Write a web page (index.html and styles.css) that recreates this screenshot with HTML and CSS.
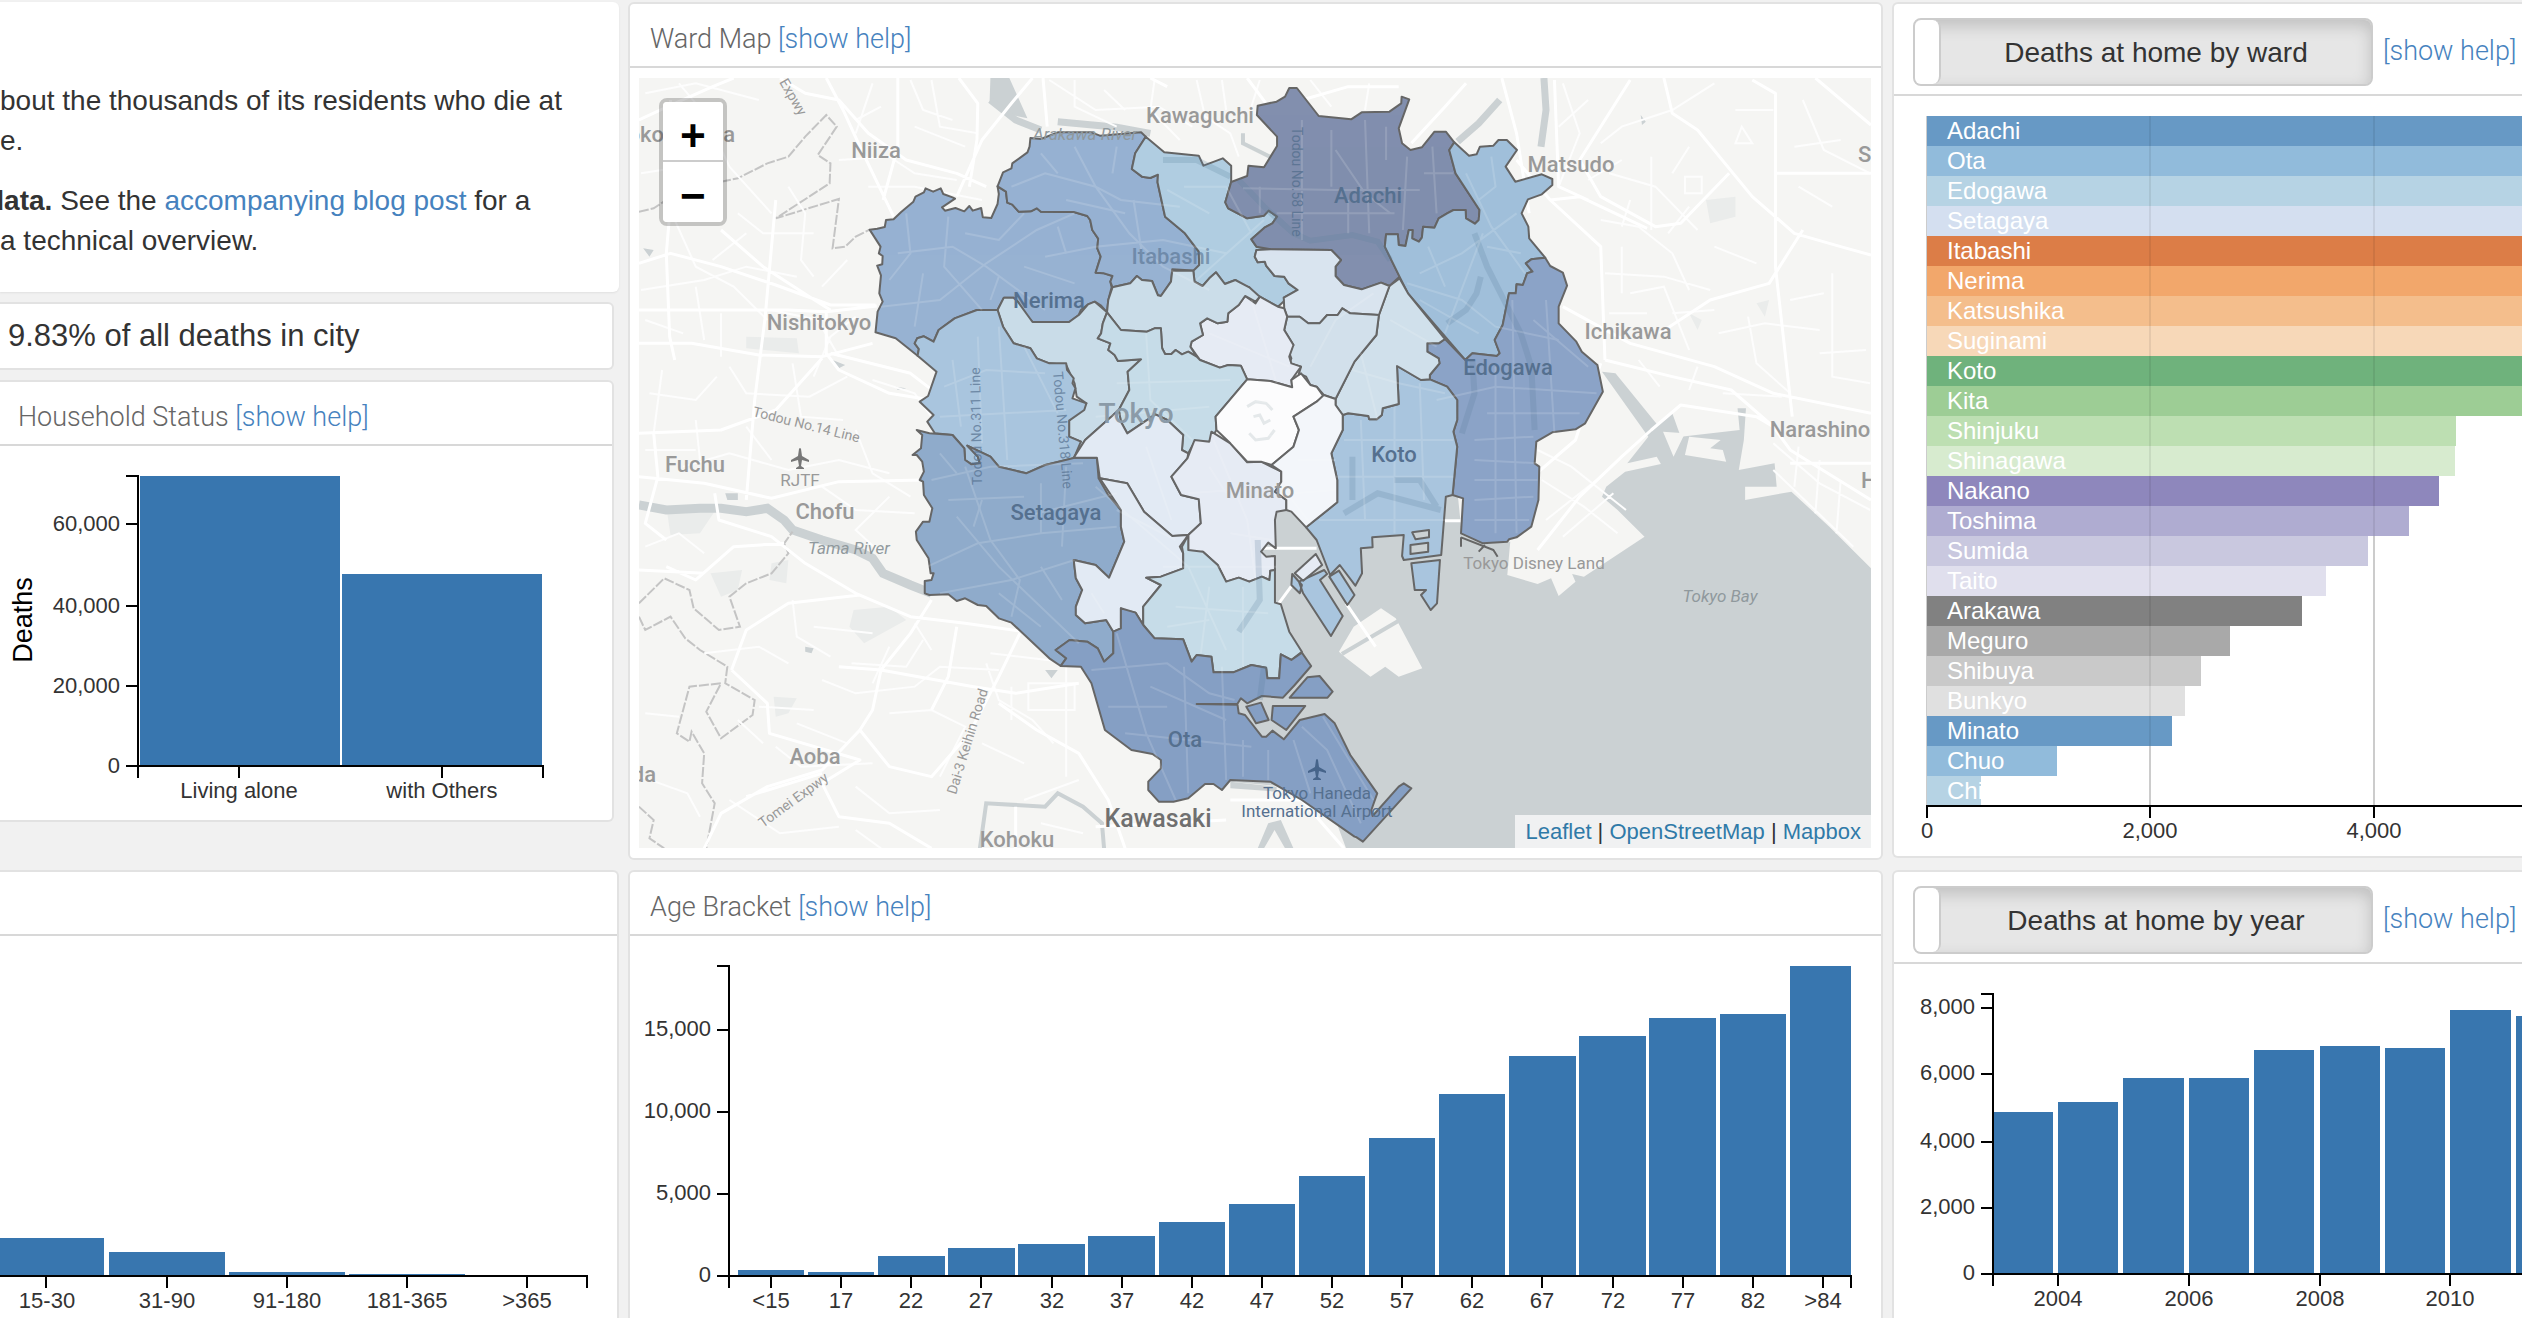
FILE: index.html
```html
<!DOCTYPE html>
<html lang="en">
<head>
<meta charset="utf-8">
<title>Tokyo deaths at home</title>
<link rel="stylesheet" href="styles.css">
</head>
<body>
<main class="dashboard">
  <div class="stack">
    <section class="intro">
      <p>bout the thousands of its residents who die at<br>e.</p>
      <p><strong class="cut">data.</strong> See the <a href="#post">accompanying blog post</a> for a<br>a technical overview.</p>
    </section>
    <section class="card open-left inset summary">9.83% of all deaths in city</section>
    <section class="card open-left inset">
      <h2 class="card-head">Household Status <a href="#help-household">[show help]</a></h2>
      <svg class="chart" viewBox="0 446 612 374" role="img" aria-label="Deaths by household status">
        <g class="bars"><rect x="140" y="476" width="200" height="290"/><rect x="342" y="574" width="200" height="192"/></g>
        <path class="axis" d="M126 476H138V766H126M126 524H138M126 606H138M126 686H138M138 778V766H543V778M239 766V778M442 766V778"/>
        <g class="tick end"><text x="120" y="531">60,000</text><text x="120" y="613">40,000</text><text x="120" y="693">20,000</text><text x="120" y="773">0</text></g>
        <g class="tick mid"><text x="239" y="798">Living alone</text><text x="442" y="798">with Others</text></g>
        <text class="axis-name" transform="translate(32 620) rotate(-90)" text-anchor="middle">Deaths</text>
      </svg>
    </section>
  </div>

  <section class="card">
    <h2 class="card-head">Ward Map <a href="#help-map">[show help]</a></h2>
    <div class="map">
      <svg class="map-canvas" viewBox="639 78 1232 770" role="img" aria-label="Map of Tokyo wards">
        <rect class="land" x="639" y="78" width="1232" height="770"/>
        <g transform="translate(620 0) scale(.42092 .33333)">
          <g class="park">
            <path d="M300 1010L420 1015 425 1060 300 1045ZM110 1520L230 1525 190 1600 120 1605ZM555 1830L640 1820 680 1860 580 1930 545 1880ZM215 1720L290 1710 280 1770 240 1790ZM365 2090L420 2095 400 2140 370 2150ZM2580 600L2650 590 2650 650 2590 670ZM2700 910L2730 900 2720 950ZM360 1690L400 1680 395 1750 355 1740ZM2540 940L2570 960 2560 990Z"/>
          </g>
          <g class="water">
            <path d="M1556 1520L1990 1480 2000 1605 2050 1632 2115 1625 2108 1725 2180 1752 2212 1735 2230 1788 2270 1745 2262 1722 2290 1730 2434 1610 2370 1530 2333 1490 2343 1460 2388 1415 2473 1392 2463 1370 2393 1390 2443 1310 2333 1115 2365 1120 2465 1275 2500 1240 2520 1310 2660 1290 2655 1225 2675 1225 2670 1320 2658 1410 2743 1390 2748 1460 2673 1460 2673 1500 2783 1475 2873 1580 2972 1705 2972 2545 1725 2545 1700 2460 1580 2360 1450 2345 1450 1900Z"/>
            <path d="M880 234H925L968 355 930 345 900 315 878 305Z"/>
            <path d="M1515 2545L1540 2470 1570 2460 1600 2545H1580L1555 2490 1530 2545ZM1450 2345L1560 2360 1560 2375 1450 2365ZM55 745L80 750 70 770ZM505 1080L535 1095 520 1105ZM655 1160L680 1165 660 1170ZM2425 345L2437 365 2428 375ZM440 1940L460 1945 455 1960 440 1955ZM1010 2010H1040L1025 2035ZM250 1480H280V1500H255Z"/>
          </g>
          <g class="land">
            <path d="M1708 1955L1743 1880 1808 1825 1843 1855 1906 2005 1850 2030 1818 2000 1783 2030 1726 1975ZM2478 1295L2503 1370 2530 1300ZM2540 1310L2530 1365 2628 1385 2620 1350 2590 1345 2615 1320Z"/>
          </g>
          <g class="river">
            <path stroke-width="9" d="M45 1515L110 1530 190 1525 240 1525 300 1535 350 1525 390 1560 410 1590 480 1620 560 1650 600 1675 625 1720 690 1755 740 1780"/>
            <path stroke-width="7" d="M880 300L940 360 1000 390M1040 365L1180 382 1260 400M2195 234L2200 330 2188 440M2090 300L2040 370 1990 425"/>
            <path stroke-width="4" d="M855 2545L870 2410 1010 2420 1040 2380 1100 2420 1145 2470 1150 2545M1480 400V430L1560 480M1715 1962L1850 1862"/>
          </g>
          <g class="boundary">
            <path d="M45 635L80 625 110 600M240 545L280 535 350 490 400 470 440 410 490 345 515 380 470 465 500 490 498 550 370 655 520 597 505 745 535 740 560 710 593 689"/>
            <path d="M45 1810L105 1735 165 1770 175 1825 235 1890 285 1880 260 1790 300 1750 360 1720 400 1660 390 1630 410 1595"/>
            <path d="M45 1850L60 1890 120 1850 155 1915 190 1950 255 2000 250 2050 320 2100 315 2145 240 2215 205 2135 240 2050 165 2060 135 2200 165 2225 170 2195 200 2260 195 2350 225 2410 205 2545M45 2420L80 2460 70 2515 105 2545"/>
          </g>
          <g class="minor">
            <path d="M60 280L180 250 330 300M50 520L150 500 230 470M130 660L180 800 270 860 350 960M50 870L200 840 300 800 420 830M400 560L440 640 430 780 460 830M520 480L640 470 700 520 800 540M560 400L600 250M690 240L720 330 790 360M740 240L760 380 850 400M590 560L700 560 860 600M260 1100L300 1180 450 1190 540 1130M100 1110L80 1300M410 1090L430 1250 530 1260M600 1140L700 1180 740 1250M150 1400L260 1360 400 1410 520 1380 640 1420M560 1290L600 1420 690 1490M480 1460L560 1530 700 1540M60 1640L140 1600 200 1660M410 1800L420 1910 500 1970M550 1990L680 2000 720 1920M480 2040L560 2080 700 2060 760 2000 900 2010M870 1990L900 2100 980 2160 1030 2230M640 2140L740 2130 820 2180 760 2330M200 1960L330 1940 400 1990M370 2240L430 2300 600 2290M260 2400L380 2500 520 2480M560 2360L640 2440 760 2430M930 2060V2160M970 2050H1080V2130H970ZM1060 2000V2330M880 1960L1080 1990M1020 240L1130 330 1280 320 1360 380M1080 240V320L1180 380M1270 240L1260 330 1330 420M1370 240L1390 350 1450 400 1470 470M1520 240L1500 320M1640 240L1690 320M1780 250L1770 330M2240 250L2280 400 2230 560M2330 430L2380 380 2500 330 2600 250M2350 520L2460 560 2560 690M2330 660L2420 680 2500 760 2540 870M2340 820L2480 830 2590 870M2450 470V690M2400 880L2480 860 2540 1050M2610 1000L2720 970 2850 990M2880 820V1130L2970 1150M2620 1180L2760 1190M2680 950L2700 1090 2780 1180M2810 300L2860 450 2970 520M2530 530H2570V580H2530ZM2650 430L2665 380 2690 430ZM2180 1350L2260 1400 2390 1530M2190 1440L2290 1520 2370 1600M2200 1560L2330 1430M2240 1610L2360 1480M2740 1330L2850 1450 2970 1530M2800 1340L2790 1460M2850 1380L2840 1540M2900 1440L2890 1600M2740 1410L2930 1640M50 2330L160 2380 190 2450M560 950L500 1010 460 1130M230 420L260 500 360 640M240 940V1070M360 930L470 960 520 1070"/>
            <path d="M180 860L200 1020M70 1180L180 1200 230 1130M180 1260L190 1380M60 960L150 1000M300 1280L360 1380M140 250L200 340 190 460M280 640L340 700 460 700M540 780L480 860M300 700L220 780M620 320L560 360M700 380L820 440M60 1350L180 1350M640 1490L560 1590 620 1660M460 1880L600 1900M330 2120L460 2130M420 2170L540 2230M640 1940L600 2050M700 1870L740 1950M860 2230L960 2290M960 2400L1090 2340M1000 2470L1100 2500M560 2490L620 2545M60 2140L140 2150M280 2160L340 2230M1150 270L1200 330M1430 240L1440 330M2300 300L2230 380M2380 480L2300 540M2540 440L2500 520M2740 330L2650 330M2790 440L2900 420M2800 560L2880 620M2400 600L2380 680M2600 740L2700 790M2350 940L2440 940M2500 940L2600 930M2780 900L2860 880M2560 1100L2540 1170M2420 1080L2470 1160M2850 1060L2960 1050M2380 740V880M2540 620L2490 700"/>
          </g>
          <g id="roads" class="road">
            <path d="M45 790L120 760 240 800 370 855 500 915 607 915M120 300L125 540 110 760 118 1010 130 1080M45 360L130 310 220 260 270 234M380 234L440 280 520 300 590 400 680 480 800 520 870 560M490 234L530 330 570 440 650 650M660 234V440L625 600M805 234L850 310 848 420 830 560M980 234L930 310 860 420 800 590M45 930H400L490 935 610 918M45 1030L170 1030 330 1065 480 1070 600 1030M240 690L340 800 450 890 500 930M370 600L345 950 320 1200 300 1500M490 930V1060L520 1110 640 1180 740 1200M480 1075L370 1230 240 1290 45 1300M500 1060L690 1120 752 1180M45 1430L200 1450 360 1495 520 1445 720 1440M80 1300L90 1430 60 1570 110 1620M225 1480L235 1560 360 1610 440 1690 560 1780 690 1850 820 1870 990 1900M110 1700L180 1740 270 1640 390 1630M45 1710L200 1720M570 1785L400 1810 300 1890 265 2010M740 1800L690 1900 620 2010 600 2130 570 2190 480 2310 350 2360 240 2440 200 2545M570 2190L640 2300 740 2330 830 2200 900 2030 950 1900M265 2010L350 2110 355 2200 570 2280 480 2350 520 2450 640 2470 740 2545M480 2320L300 2390M520 2000L620 2010 840 2060 940 2080 1090 2050M800 1880L780 2030 740 2130M900 2110L990 2190 1090 2260 1160 2400 1200 2545M940 2545V2420M1260 234L1300 260M1005 234L1015 380M1490 234L1570 370 1620 300 1730 260 1850 260M2095 234L2130 400 2160 640M2130 480L2210 600 2330 740 2340 1080M1880 430L1960 320 2010 250M2220 240L2230 560 2300 600M2480 234L2500 340 2560 390 2690 590 2790 700 2900 740 2972 765M2690 240L2745 280V800L2785 1250M2745 520H2972M2840 234L2972 375M2400 240L2280 480 2330 590 2460 680 2520 670 2635 520M2810 690L2730 850 2590 900 2470 1000M2210 600L2280 590 2440 685M2240 920L2400 1030 2600 1100 2740 1180 2972 1240M2340 1080L2500 1130 2640 1170 2740 1280 2780 1350 2972 1500M2180 1650L2280 1490 2380 1370 2450 1290 2520 1215 2700 1250 2740 1280M2330 1090L2270 1320 2150 1450M2780 1390H2972M1795 1940L1725 1810M1450 2400H1620L1720 2545M1130 2480L1440 2460M1530 1645H1655M1960 1562H2000M1565 1810L1600 1750"/>
          </g>
          <g class="ward">
            <path fill="#97b2d2" d="M593 689L611 686 629 681 632 660 650 658 668 636 697 605 702 590 722 577 726 565 744 575 762 565 768 582 790 592 796 596 765 622 772 632 797 624 818 634 830 618 838 632 858 624 862 652 882 654 897 612 900 582 897 559 917 575 920 608 932 614 947 635 976 634 990 625 1000 635 1078 636 1110 648 1117 660 1122 690 1136 716 1134 745 1142 770 1130 818 1150 820 1170 828 1165 845 1168 862 1160 900 1157 937 1143 917 1128 905 1112 913 1095 930 1090 945 1067 966 980 966 960 940 945 905 935 893 912 893 897 930 848 930 795 955 757 990 745 1025 722 1009 706 1015 700 1030 710 1047 707 1067 655 1015 607 997 612 935 624 905 616 880 620 826 611 797 623 793 624 768 615 760 619 740Z"/>
            <path fill="#97b2d2" d="M897 559L910 517 930 505 932 490 968 457 973 440 975 414 1000 417 1040 397 1120 397 1140 407 1238 397 1249 410 1224 460 1216 507 1240 530 1260 534 1278 524 1277 547 1295 650 1342 700 1375 755 1376 795 1370 812 1312 808 1309 845 1285 888 1278 886 1264 843 1240 840 1228 828 1212 850 1170 862 1165 845 1170 828 1150 820 1130 818 1142 770 1134 745 1136 716 1122 690 1117 660 1110 648 1078 636 1000 635 990 625 976 634 947 635 932 614 920 608 917 575Z"/>
            <path fill="#b0cde1" d="M1249 410L1293 457 1375 467 1386 497 1432 475 1452 497 1452 546 1438 607 1445 625 1490 655 1530 647 1541 632 1561 650 1550 670 1531 683 1500 718 1512 740 1546 748V757L1512 750 1508 770 1515 787 1532 785 1535 797 1555 828 1578 830 1588 850 1610 870 1577 893 1578 903 1563 920 1520 890 1500 882 1495 862 1478 856 1462 840 1437 852 1416 817 1400 835 1384 858 1365 845 1362 812 1376 795 1375 755 1342 700 1295 650 1277 547 1278 524 1260 534 1240 530 1216 507 1224 460Z"/>
            <path fill="#828fae" d="M1438 607L1452 546 1490 528 1493 497 1530 502 1561 438V410L1513 345 1515 317 1560 305 1580 290 1590 264H1608L1660 348 1737 358 1762 337 1828 335 1856 310 1857 290 1875 298 1850 385 1858 430 1878 450 1905 442 1935 395H1962L1982 427 1970 450 1985 520 2042 630 2040 660 2031 671 2010 655 2009 630H1980L1965 640 1945 655 1935 683 1908 680 1905 713 1898 725 1882 715 1883 690H1874L1866 738 1850 735 1848 703H1820L1817 740 1852 830 1828 858 1808 848 1762 868 1720 855 1700 828V800L1713 780 1690 750 1546 748 1512 740 1500 718 1531 683 1550 670 1561 650 1541 632 1530 647 1490 655 1445 625Z"/>
            <path fill="#a0bfda" d="M1982 427L2017 467 2035 463 2043 440 2075 437 2087 420H2107L2131 450 2104 500 2127 545 2190 523 2215 537V555L2190 583 2157 598 2142 640 2158 680 2160 715 2198 773 2165 778 2152 790 2168 815 2155 820 2145 855 2130 853 2128 880H2112L2097 975 2078 1020 2090 1060 2083 1068 2025 1060 2008 1080 1872 880 1852 830 1817 740 1820 703H1848L1850 735 1866 738 1874 690H1883L1882 715 1898 725 1905 713 1908 680 1935 683 1945 655 1965 640 1980 630H2009L2010 655 2031 671 2040 660 2042 630 1985 520 1970 450Z"/>
            <path fill="#8ba3c7" d="M2198 773L2210 798 2240 818 2250 857 2230 920V970L2272 1025 2285 1055 2322 1095 2335 1175 2293 1270 2270 1288 2215 1297 2177 1325 2173 1390 2184 1400 2182 1500 2165 1580 2130 1612 2112 1618 2108 1625 2050 1630 1998 1600 2003 1495 1978 1485 1989 1340 1980 1295 1989 1260V1200L1965 1160 1924 1138V1125L1947 1090 1945 1075 1918 1055V1030H1945L1960 1017 2008 1080 2025 1060 2083 1068 2090 1060 2078 1020 2097 975 2112 880H2128L2130 853 2145 855 2155 820 2168 815 2152 790 2165 778Z"/>
            <path fill="#a9c5de" d="M1846 1098L1903 1140 1924 1138 1965 1160 1989 1200V1260L1980 1295 1989 1340 1978 1485 1962 1490 1951 1665 1862 1680 1858 1668 1862 1605 1787 1612 1788 1642 1760 1645 1763 1720 1747 1757 1710 1695 1687 1725 1655 1620 1630 1582 1704 1507V1440L1690 1360 1717 1290V1245L1730 1240 1778 1248 1780 1258H1798L1810 1245 1812 1225 1850 1212Z"/>
            <path fill="#a9c5de" d="M1613 1745L1673 1710 1680 1722 1663 1740 1717 1848 1689 1908 1623 1780ZM1685 1730L1708 1712 1745 1785 1728 1815ZM1880 1690L1948 1680 1941 1810 1926 1830 1903 1785 1915 1770 1888 1770ZM1597 1722L1620 1755 1615 1780 1595 1755Z"/>
            <path fill="#cbd1d3" d="M1882 1597L1922 1590V1612L1890 1618ZM1878 1635L1920 1628V1655L1878 1662Z"/>
            <path fill="#d0e0eb" d="M1852 835L1872 880 1960 1017 1945 1030H1918V1055L1945 1075 1947 1090 1924 1125V1138L1903 1140 1846 1098 1850 1212 1812 1225 1810 1245 1798 1258H1780L1778 1248 1730 1240 1717 1245 1700 1215V1197L1745 1085 1797 1005 1803 945 1828 858Z"/>
            <path fill="#d9e4ef" d="M1546 748L1690 750 1713 780 1700 800V828L1720 855 1762 868 1808 848 1828 858 1803 945 1735 940 1716 925 1705 945H1680L1662 970H1635L1615 950H1585L1578 925 1577 893 1610 870 1588 850 1578 830 1555 828 1535 797 1532 785 1515 787 1508 770 1512 750Z"/>
            <path fill="#d2e0eb" d="M1803 945L1735 940 1716 925 1705 945H1680L1662 970H1635L1615 950H1585L1578 990 1600 1035 1590 1030 1582 1035 1595 1075 1590 1090 1618 1100 1613 1120 1630 1130 1640 1155 1655 1160 1672 1185 1700 1197 1745 1085 1797 1005Z"/>
            <path fill="#e6ebf4" d="M1378 970L1395 955 1420 970 1443 965 1445 940 1470 915 1485 888 1510 910 1520 890 1563 920 1578 925 1585 950 1578 990 1600 1035 1590 1070 1595 1090 1618 1100 1595 1140 1597 1162 1545 1143 1490 1138 1475 1097 1445 1095 1425 1103 1378 1080 1355 1040 1358 1025 1385 1005Z"/>
            <path fill="#cbdde9" d="M1170 862L1212 850 1228 828 1240 840 1264 843 1278 886 1285 888 1309 845 1312 812H1362L1365 845 1384 858 1400 835 1416 817 1437 852 1462 840 1495 862 1520 890 1510 905 1485 888 1470 915 1445 940 1443 965 1420 970 1395 955 1378 970 1385 1005 1358 1025 1355 1040 1370 1070 1350 1055 1335 1063 1320 1050 1310 1062H1295L1288 1045 1285 985H1270L1252 995 1190 990 1157 937 1160 900Z"/>
            <path fill="#c9dce8" d="M897 930L912 893H935L945 905 980 966H1067L1090 945 1112 913 1128 905 1157 937 1147 970 1143 1000 1135 1015 1165 1030 1160 1050 1175 1065 1183 1083 1238 1078 1206 1115 1210 1170 1185 1230 1105 1320 1078 1375 1078 1348 1095 1325 1067 1310V1262L1108 1210 1085 1190 1080 1150 1060 1095 1020 1090 990 1075 975 1045 935 1030 910 980Z"/>
            <path fill="#a9c5de" d="M707 1067L710 1047 700 1030 706 1015 722 1009 745 1025 757 990 795 955 848 930H897L910 980 935 1030 975 1045 990 1075 1020 1090H1060L1062 1110 1078 1135 1075 1150 1082 1165 1075 1195 1108 1210 1103 1230 1067 1262V1310L1095 1325 1078 1375 1010 1395 965 1420 900 1400 880 1370 825 1337 850 1370 855 1390 835 1393 820 1380 818 1345 790 1305 748 1300 730 1265 745 1245 712 1205 732 1188 752 1115Z"/>
            <path fill="#8fabcb" d="M705 1290L735 1300 790 1305 818 1345 820 1380 835 1393 855 1390 850 1370 825 1337 880 1370 900 1400 965 1420 1010 1395 1080 1373H1133L1137 1435 1160 1485 1190 1530V1580L1198 1625 1162 1733 1130 1695 1078 1680 1083 1735 1098 1770 1083 1820V1845L1105 1870 1155 1860 1172 1895V1960L1150 1985 1135 1945 1110 1925 1068 1920 1035 1950 1060 1975 1047 1998 1020 1975 930 1868 900 1855 870 1818 850 1815 820 1795 800 1803 780 1783 735 1785 724 1780V1743L740 1740 745 1720H738L733 1675 705 1620 703 1595 720 1565H735L742 1525 722 1485 720 1445 712 1440 722 1415 718 1385 705 1365H695L715 1345 718 1305Z"/>
            <path fill="#c6dce8" d="M1157 937L1190 990 1252 995 1270 985H1285L1288 1045 1295 1062H1310L1320 1050 1335 1063 1350 1055 1370 1070 1378 1080 1425 1103 1445 1095 1475 1097 1490 1138 1415 1250 1417 1290 1400 1325H1365L1350 1360 1335 1350 1338 1305 1300 1260 1272 1243 1205 1300 1190 1265 1185 1230 1210 1170 1206 1115 1238 1078 1183 1083 1175 1065 1160 1050 1165 1030 1135 1015 1143 1000 1147 970Z"/>
            <path fill="#e2eaf4" d="M1185 1230L1190 1265 1205 1300 1272 1243 1300 1260 1338 1305 1335 1350 1350 1360 1348 1375 1310 1430 1333 1485 1375 1498 1380 1570 1350 1605 1312 1608 1245 1535 1205 1450 1140 1435 1133 1373H1078L1105 1320Z"/>
            <path fill="#e2eaf4" d="M1140 1435L1205 1450 1245 1535 1312 1608 1350 1605 1330 1640 1338 1660V1705L1285 1730 1250 1733 1285 1755 1243 1820V1875L1225 1838 1215 1835H1195L1190 1825V1885L1172 1895 1155 1860 1105 1870 1083 1845V1820L1098 1770 1083 1735 1078 1680 1130 1695 1162 1733 1198 1625 1190 1580V1530Z"/>
            <path fill="#e6ebf4" d="M1400 1325L1405 1295 1450 1330 1490 1387 1523 1385 1571 1415V1445L1556 1475 1583 1500V1530L1560 1535 1556 1560 1558 1645 1540 1628 1523 1655 1535 1670 1556 1668V1710L1545 1712 1543 1740 1525 1730 1495 1745 1470 1733 1440 1745 1420 1695 1385 1655 1350 1660 1350 1605 1380 1570 1375 1498 1333 1485 1310 1430 1348 1375 1365 1320ZM1603 1720L1653 1662 1668 1695 1623 1742Z"/>
            <path fill="#fcfcfd" d="M1490 1138L1545 1143 1597 1162 1595 1140 1618 1120 1640 1155 1655 1160 1672 1190 1655 1205 1600 1250 1613 1290 1600 1340 1548 1395 1523 1385H1490L1450 1330 1417 1290 1415 1250Z"/>
            <path fill="#f3f6fa" d="M1672 1185L1700 1197V1215L1717 1245V1290L1690 1360 1704 1440V1507L1630 1582 1595 1535 1583 1530V1500L1556 1475 1571 1445V1415L1548 1395 1600 1340 1613 1290 1600 1250 1655 1205Z"/>
            <path fill="#c6dce8" d="M1335 1640L1350 1605V1650L1385 1655 1420 1695 1440 1745 1470 1733 1495 1745 1525 1730 1543 1740 1545 1712 1556 1710V1808L1570 1813 1590 1895 1620 1955 1595 1980 1570 1963 1566 2035H1538L1535 2003 1500 1995 1457 2017H1410L1405 1970 1370 1965 1358 1985 1338 1918 1270 1915 1243 1875V1820L1285 1755 1250 1733 1285 1730 1338 1705V1660Z"/>
            <path fill="#859fc4" d="M1047 1998L1060 1975 1035 1950 1068 1920 1110 1925 1135 1945 1150 1985 1172 1960V1895L1190 1885V1825L1225 1838 1243 1875 1270 1915 1338 1918 1358 1985 1370 1965 1405 1970 1410 2017H1457L1500 1995 1535 2003 1538 2035H1566L1570 1963 1595 1980 1620 1958 1642 1998 1603 2055 1575 2093 1525 2088 1490 2110 1475 2095 1467 2111 1370 2112 1467 2114 1470 2140 1485 2145 1525 2210H1535L1550 2192 1577 2218 1615 2160 1674 2142 1698 2170 1735 2265 1799 2380 1785 2430 1788 2448 1850 2360 1862 2350 1880 2365 1765 2525 1750 2512 1745 2510 1620 2400 1545 2345 1450 2340 1430 2370 1410 2352H1390L1350 2395 1315 2405H1280L1255 2370V2345L1285 2305V2280L1265 2262 1215 2250 1152 2190 1120 2050 1095 2000ZM1591 2093L1633 2032 1662 2028 1693 2075 1681 2093ZM1551 2118H1628L1583 2190 1548 2160ZM1488 2120L1523 2108 1541 2160 1511 2170Z"/>
            <path fill="none" d="M1998 1612L2075 1650 2085 1670M2040 1655L2055 1635M1998 1612V1640"/>
          </g>
          <g class="ward-water">
            <path d="M1470 540L1530 620 1600 700 1640 722 1740 705 1800 725 1830 780"/>
            <path d="M2030 700L2060 800 2100 900 2140 1000 2165 1100 2173 1290M1965 970L2010 930 2035 880 2045 830M2025 1080L2030 1180 2000 1300M1290 480H1370L1450 530"/>
            <path d="M1740 1370V1500M1840 1440H1900L1940 1520M1720 1540L1800 1480 1950 1530M1470 1895L1520 1800 1515 1620M1530 2000L1520 2100"/>
          </g>
          <g class="moat">
            <path d="M1490 1220L1510 1205 1535 1210 1550 1230M1495 1300L1510 1320 1540 1315 1555 1290M1505 1250L1520 1245 1530 1270 1545 1260"/>
          </g>
          <g class="ward-roads">
            <path d="M620 920L760 900 870 790 990 690 1080 640M660 760L790 740 870 800 1010 930M780 650L770 800 860 930M930 560L1010 520 1130 560 1190 600 1330 620M1080 440L1130 560 1210 700 1290 800 1400 870M1010 770L1130 740 1290 720 1440 760M1340 560L1440 560 1500 700M1370 840L1530 660M1480 565L1700 570 1900 570M1620 360V720M1770 360L1780 700M1870 470L1860 690M1700 450L1770 580 1830 640M1930 440L1940 640M2010 520L2070 680 2150 820M1900 820L2000 760 2130 640M1870 850L2000 900 2080 980 2230 1020M2050 700L1960 1000M1940 1200L2080 1160 2320 1180M2120 900L2130 1600M2200 900L2220 1300M2030 1380L2180 1390M2030 1500L2170 1490M1790 880L1700 960 1640 1100M1830 960L1940 1040M1740 1110L1850 1150 1960 1180M1760 1060L1800 1260M1900 1150L1910 1500M1760 1260L1770 1560M1840 1220V1600M1720 1320H1980M1700 1430H1980M1660 1560L1960 1560M770 1160L870 1110 1010 1120M760 1250L1060 1230M850 1010L860 1330M960 1040L1040 1240M1180 1150L1450 1140M1130 1250L1400 1220M1250 1000L1260 1200 1360 1320M740 1440L880 1400 1100 1390M730 1700L850 1630 1000 1600 1180 1580M820 1400L880 1620 950 1740 930 1850M760 1780L930 1740 1080 1680M800 1550L900 1700 1090 1930M1000 1450V1600M1130 1460L1350 1700 1440 1950M1180 1530L1320 1620M1250 1340L1310 1560M1410 1320L1490 1560 1510 1740M1350 1480L1570 1460M1320 1820L1540 1840M1290 1700L1560 1700M1480 1760V2000M1400 1760L1380 1960M1180 1900L1250 2200 1320 2400M1120 2010L1300 1990 1400 2080 1460 2100M1200 2200L1500 2240M1430 2000L1440 2340M1540 2250V2340M1620 2180L1680 2250 1760 2470M1670 2150L1790 2400M1500 900L1560 1150M1400 1000L1590 1100M1500 1200L1600 1220M1470 1290L1600 1320M1610 1380L1700 1380M1600 1480L1700 1470M1560 1440L1640 1570"/>
            <path d="M680 640L690 760 640 840M720 820L700 980M820 700L900 720 960 640M900 830L880 900M960 800L1080 850M1040 680L1060 760M1000 460L1040 520M1180 440L1170 520M1060 600L1200 640M1220 600L1240 760M1300 570L1400 640M1520 560V640M1690 390V560M1560 640H1840M1910 520H1980M1820 380V480M1730 600V700M2070 470L2080 560 2040 600M1920 740L1960 860M2060 740L2140 760M1900 900L2040 1000M2170 960L2300 1100M2080 1100V1600M2060 1240L2280 1240M2030 1320L2170 1310M2030 1440H2180M2030 1560H2160M790 1080L810 1280M900 980L920 1380M760 1360L800 1420M780 1500L960 1490M860 1500L840 1580M1060 1400L1050 1640M960 1550L1180 1480M900 1780L1000 1880M1000 1700L1050 1800M1120 1780L1150 1840M1400 1400L1440 1480M1450 1600L1550 1620M1300 1880L1400 1860M1340 2000L1350 2380M1260 2060L1440 2160M1160 2120L1300 2120M1480 2220V2330M1600 2220L1640 2380"/>
            <circle cx="1525" cy="1260" r="45"/>
          </g>
        </g>
        <defs><path id="plane" d="M-1-10Q0-12 1-10L2-3 9 1V3L2 1 1 7 4 9V10H-4V9L-1 7-2 1-9 3V1L-2-3Z"/></defs>
        <use href="#plane" x="800" y="459" class="plane"/>
        <use href="#plane" x="1317" y="770" class="plane in-ward"/>
        <g class="place">
          <text x="735" y="142" text-anchor="end">Tokorozawa</text>
          <text x="1200" y="123" text-anchor="middle">Kawaguchi</text>
          <text x="876" y="158" text-anchor="middle">Niiza</text>
          <text x="819" y="330" text-anchor="middle">Nishitokyo</text>
          <text x="695" y="472" text-anchor="middle">Fuchu</text>
          <text x="825" y="519" text-anchor="middle">Chofu</text>
          <text x="815" y="764" text-anchor="middle">Aoba</text>
          <text x="644" y="782" text-anchor="middle">da</text>
          <text x="1017" y="847" text-anchor="middle">Kohoku</text>
          <text x="1571" y="172" text-anchor="middle">Matsudo</text>
          <text x="1628" y="339" text-anchor="middle">Ichikawa</text>
          <text x="1820" y="437" text-anchor="middle">Narashino</text>
          <text x="1858" y="162">S</text>
          <text x="1861" y="488">H</text>
          <text x="1260" y="498" text-anchor="middle">Minato</text>
        </g>
        <text class="place city" x="1158" y="827" text-anchor="middle">Kawasaki</text>
        <g class="place in-ward">
          <text x="1171" y="264" text-anchor="middle" opacity=".6">Itabashi</text>
          <text x="1049" y="308" text-anchor="middle">Nerima</text>
          <text x="1056" y="520" text-anchor="middle">Setagaya</text>
          <text x="1185" y="747" text-anchor="middle">Ota</text>
          <text x="1394" y="462" text-anchor="middle">Koto</text>
          <text x="1368" y="203" text-anchor="middle">Adachi</text>
          <text x="1508" y="375" text-anchor="middle">Edogawa</text>
        </g>
        <text class="place capital" x="1136" y="423" text-anchor="middle">Tokyo</text>
        <g class="place small">
          <text x="800" y="486" text-anchor="middle">RJTF</text>
          <text x="1534" y="569" text-anchor="middle">Tokyo Disney Land</text>
        </g>
        <g class="place line">
          <text transform="translate(752 416) rotate(14)">Todou No.14 Line</text>
          <text transform="translate(763 828) rotate(-36)">Tomei Expwy</text>
          <text transform="translate(956 795) rotate(-73)">Dai-3 Keihin Road</text>
          <text transform="translate(779 82) rotate(60)">Expwy</text>
        </g>
        <g class="place small in-ward">
          <text x="1317" y="799" text-anchor="middle">Tokyo Haneda</text>
          <text x="1317" y="817" text-anchor="middle">International Airport</text>
        </g>
        <g class="place line in-ward">
          <text transform="translate(982 485) rotate(-91)" opacity=".7">Todou No.311 Line</text>
          <text transform="translate(1053 372) rotate(85)" opacity=".7">Todou No.318 Line</text>
          <text transform="translate(1292 127) rotate(90)" opacity=".8">Todou No.58 Line</text>
        </g>
        <g class="place small sea">
          <text x="1085" y="140" text-anchor="middle">Arakawa River</text>
          <text x="849" y="554" text-anchor="middle">Tama River</text>
          <text x="1720" y="602" text-anchor="middle">Tokyo Bay</text>
        </g>
      </svg>
      <div class="zoom">
        <button type="button" aria-label="Zoom in">+</button>
        <button type="button" aria-label="Zoom out">−</button>
      </div>
      <div class="credits"><a href="#leaflet">Leaflet</a> | <a href="#osm">OpenStreetMap</a> | <a href="#mapbox">Mapbox</a></div>
    </div>
  </section>

  <section class="card open-right">
    <div class="card-head switch-head">
      <button type="button" class="switch"><span class="knob"></span><span class="switch-text">Deaths at home by ward</span></button>
      <a href="#help-ward">[show help]</a>
    </div>
    <svg class="chart" viewBox="1894 96 628 760" role="img" aria-label="Deaths at home by ward">
      <path class="grid" d="M1927 116V806M2150 116V806M2374 116V806"/>
      <g>
        <rect x="1927" y="116" width="595" height="30" fill="#6799c5"/><rect x="1927" y="146" width="595" height="30" fill="#91bbdb"/>
        <rect x="1927" y="176" width="595" height="30" fill="#b6d3e4"/><rect x="1927" y="206" width="595" height="30" fill="#d4dff0"/>
        <rect x="1927" y="236" width="595" height="30" fill="#dc7d47"/><rect x="1927" y="266" width="595" height="30" fill="#f2a76b"/>
        <rect x="1927" y="296" width="595" height="30" fill="#f4be8c"/><rect x="1927" y="326" width="595" height="30" fill="#f7d8b8"/>
        <rect x="1927" y="356" width="595" height="30" fill="#6fb27c"/><rect x="1927" y="386" width="595" height="30" fill="#9dcd95"/>
        <rect x="1927" y="416" width="529" height="30" fill="#bddfb2"/><rect x="1927" y="446" width="528" height="30" fill="#d7ebcf"/>
        <rect x="1927" y="476" width="512" height="30" fill="#8e87bc"/><rect x="1927" y="506" width="482" height="30" fill="#afacd1"/>
        <rect x="1927" y="536" width="441" height="30" fill="#c9c8df"/><rect x="1927" y="566" width="399" height="30" fill="#e0dfed"/>
        <rect x="1927" y="596" width="375" height="30" fill="#818181"/><rect x="1927" y="626" width="303" height="30" fill="#a9a9a9"/>
        <rect x="1927" y="656" width="274" height="30" fill="#c9c9c9"/><rect x="1927" y="686" width="258" height="30" fill="#e0e0e0"/>
        <rect x="1927" y="716" width="245" height="30" fill="#6799c5"/><rect x="1927" y="746" width="130" height="30" fill="#91bbdb"/>
        <rect x="1927" y="776" width="54" height="30" fill="#b6d3e4"/>
      </g>
      <path class="grid-over" d="M2150 116V746M2374 116V536"/>
      <path class="axis" d="M1927 818V806H2522M2150 806V818M2374 806V818"/>
      <g class="ward-name">
        <text x="1947" y="139">Adachi</text><text x="1947" y="169">Ota</text><text x="1947" y="199">Edogawa</text><text x="1947" y="229">Setagaya</text>
        <text x="1947" y="259">Itabashi</text><text x="1947" y="289">Nerima</text><text x="1947" y="319">Katsushika</text><text x="1947" y="349">Suginami</text>
        <text x="1947" y="379">Koto</text><text x="1947" y="409">Kita</text><text x="1947" y="439">Shinjuku</text><text x="1947" y="469">Shinagawa</text>
        <text x="1947" y="499">Nakano</text><text x="1947" y="529">Toshima</text><text x="1947" y="559">Sumida</text><text x="1947" y="589">Taito</text>
        <text x="1947" y="619">Arakawa</text><text x="1947" y="649">Meguro</text><text x="1947" y="679">Shibuya</text><text x="1947" y="709">Bunkyo</text>
        <text x="1947" y="739">Minato</text><text x="1947" y="769">Chuo</text><text x="1947" y="799">Chi</text>
      </g>
      <g class="tick mid"><text x="1927" y="838">0</text><text x="2150" y="838">2,000</text><text x="2374" y="838">4,000</text></g>
    </svg>
  </section>

  <section class="card open-left open-bottom">
    <h2 class="card-head blank"></h2>
    <svg class="chart" viewBox="0 936 617 382" role="img" aria-label="Days until found">
      <g class="bars"><rect x="0" y="1238" width="104" height="38"/><rect x="109" y="1252" width="116" height="24"/><rect x="229" y="1272" width="116" height="4"/><rect x="349" y="1274" width="116" height="2"/></g>
      <path class="axis" d="M0 1276H587V1288M46 1276V1288M167 1276V1288M287 1276V1288M407 1276V1288M527 1276V1288"/>
      <g class="tick mid"><text x="47" y="1308">15-30</text><text x="167" y="1308">31-90</text><text x="287" y="1308">91-180</text><text x="407" y="1308">181-365</text><text x="527" y="1308">&gt;365</text></g>
    </svg>
  </section>

  <section class="card open-bottom">
    <h2 class="card-head">Age Bracket <a href="#help-age">[show help]</a></h2>
    <svg class="chart" viewBox="630 936 1251 382" role="img" aria-label="Deaths by age bracket">
      <g class="bars">
        <rect x="738" y="1270" width="66" height="6"/><rect x="808" y="1272" width="66" height="4"/><rect x="878" y="1256" width="67" height="20"/><rect x="948" y="1248" width="67" height="28"/>
        <rect x="1018" y="1244" width="67" height="32"/><rect x="1088" y="1236" width="67" height="40"/><rect x="1159" y="1222" width="66" height="54"/><rect x="1229" y="1204" width="66" height="72"/>
        <rect x="1299" y="1176" width="66" height="100"/><rect x="1369" y="1138" width="66" height="138"/><rect x="1439" y="1094" width="66" height="182"/><rect x="1509" y="1056" width="67" height="220"/>
        <rect x="1579" y="1036" width="67" height="240"/><rect x="1649" y="1018" width="67" height="258"/><rect x="1720" y="1014" width="66" height="262"/><rect x="1790" y="966" width="61" height="310"/>
      </g>
      <path class="axis" d="M717 966H729V1276H717M717 1030H729M717 1112H729M717 1194H729M729 1288V1276H1851V1288M771 1276V1288M841 1276V1288M911 1276V1288M981 1276V1288M1052 1276V1288M1122 1276V1288M1192 1276V1288M1262 1276V1288M1332 1276V1288M1402 1276V1288M1472 1276V1288M1542 1276V1288M1613 1276V1288M1683 1276V1288M1753 1276V1288M1823 1276V1288"/>
      <g class="tick end"><text x="711" y="1036">15,000</text><text x="711" y="1118">10,000</text><text x="711" y="1200">5,000</text><text x="711" y="1282">0</text></g>
      <g class="tick mid"><text x="771" y="1308">&lt;15</text><text x="841" y="1308">17</text><text x="911" y="1308">22</text><text x="981" y="1308">27</text><text x="1052" y="1308">32</text><text x="1122" y="1308">37</text><text x="1192" y="1308">42</text><text x="1262" y="1308">47</text><text x="1332" y="1308">52</text><text x="1402" y="1308">57</text><text x="1472" y="1308">62</text><text x="1542" y="1308">67</text><text x="1613" y="1308">72</text><text x="1683" y="1308">77</text><text x="1753" y="1308">82</text><text x="1823" y="1308">&gt;84</text></g>
    </svg>
  </section>

  <section class="card open-right open-bottom">
    <div class="card-head switch-head">
      <button type="button" class="switch"><span class="knob"></span><span class="switch-text">Deaths at home by year</span></button>
      <a href="#help-year">[show help]</a>
    </div>
    <svg class="chart" viewBox="1894 964 628 354" role="img" aria-label="Deaths at home by year">
      <g class="bars">
        <rect x="1994" y="1112" width="59" height="162"/><rect x="2058" y="1102" width="60" height="172"/><rect x="2123" y="1078" width="61" height="196"/><rect x="2189" y="1078" width="60" height="196"/>
        <rect x="2254" y="1050" width="60" height="224"/><rect x="2320" y="1046" width="60" height="228"/><rect x="2385" y="1048" width="60" height="226"/><rect x="2450" y="1010" width="61" height="264"/><rect x="2516" y="1016" width="6" height="258"/>
      </g>
      <path class="axis" d="M1981 994H1993V1274H1981M1981 1008H1993M1981 1074H1993M1981 1142H1993M1981 1208H1993M1993 1286V1274H2522M2058 1274V1286M2189 1274V1286M2320 1274V1286M2450 1274V1286"/>
      <g class="tick end"><text x="1975" y="1014">8,000</text><text x="1975" y="1080">6,000</text><text x="1975" y="1148">4,000</text><text x="1975" y="1214">2,000</text><text x="1975" y="1280">0</text></g>
      <g class="tick mid"><text x="2058" y="1306">2004</text><text x="2189" y="1306">2006</text><text x="2320" y="1306">2008</text><text x="2450" y="1306">2010</text></g>
    </svg>
  </section>
</main>
</body>
</html>
```
FILE: styles.css
```css
* { box-sizing: border-box; }

body {
  margin: 0;
  background: #f1f1f1;
  color: #333;
  font: 28px/40px "Liberation Sans", Arial, sans-serif;
}

a { color: #4682be; text-decoration: none; }
button { font: inherit; color: inherit; padding: 0; margin: 0; }

.dashboard {
  display: grid;
  grid-template-columns: 619fr 1255fr 630fr;
  align-items: start;
  gap: 10px 9px;
  padding-top: 2px;
}
.dashboard > *, .stack > * { min-width: 0; }
.stack { display: flex; flex-direction: column; gap: 10px; }

.intro {
  padding: 79px 30px 31px 0;
  background: #fff;
  border-radius: 0 6px 6px 0;
  box-shadow: 0 1px 2px #e0e0e0;
  white-space: nowrap;
  overflow: hidden;
}
.intro p { margin: 0 0 20px; }
.intro p:last-child { margin: 0; }
.cut { margin-left: -13px; }

.card {
  background: #fff;
  border: 2px solid #e2e2e2;
  border-radius: 6px;
  overflow: hidden;
}
.open-left { border-left: 0; border-top-left-radius: 0; border-bottom-left-radius: 0; }
.open-right { border-right: 0; border-top-right-radius: 0; border-bottom-right-radius: 0; }
.open-bottom { border-bottom: 0; border-bottom-left-radius: 0; border-bottom-right-radius: 0; }
.inset { margin-right: 5px; }

.summary { padding: 12px 8px; font-size: 31px; }

.card-head {
  margin: 0;
  padding: 15px 20px 7px;
  border-bottom: 2px solid #d8d8d8;
  color: #666;
  font-family: Roboto, "Liberation Sans", sans-serif;
  font-size: 27px;
  font-weight: 300;
  line-height: 40px;
  white-space: nowrap;
}
.open-left .card-head { padding-left: 18px; }
.card-head.blank { height: 64px; }
.switch-head {
  display: flex;
  align-items: center;
  gap: 10px;
  padding: 14px 0 8px 19px;
}
.switch-head a { padding-bottom: 2px; }

.switch {
  display: flex;
  width: 460px;
  height: 68px;
  border: 2px solid #ccc;
  border-radius: 8px;
  background: #e6e6e6;
  box-shadow: inset 0 6px 16px rgba(0, 0, 0, .17);
  color: #333;
  font-family: "Liberation Sans", Arial, sans-serif;
  font-size: 28px;
  font-weight: 400;
}
.knob {
  width: 26px;
  height: 64px;
  background: #fff;
  border-right: 2px solid #ccc;
  border-radius: 6px 8px 8px 6px;
}
.switch-text { flex: 1; line-height: 66px; text-align: center; }

.chart { display: block; width: 100%; height: auto; }
.chart text { font-family: "Liberation Sans", Arial, sans-serif; }
.bars { fill: #3876af; }
.axis { fill: none; stroke: #000; stroke-width: 2; }
.grid { stroke: #ccc; stroke-width: 2; }
.grid-over { stroke: rgba(0, 0, 0, .07); stroke-width: 2; }
.tick { font-size: 22px; fill: #333; }
.mid { text-anchor: middle; }
.end { text-anchor: end; }
.axis-name { font-size: 27px; fill: #000; }
.ward-name { font-size: 24px; fill: #fff; }

.map { position: relative; margin: 10px 10px 10px 9px; }
.map-canvas { display: block; width: 100%; height: auto; }
.land { fill: #f5f5f3; }
.park { fill: #eaeceb; }
.water { fill: #cbd1d3; }
.river { fill: none; stroke: #cbd1d3; }
.river path, .boundary path, .road path, .minor path, .ward path, .ward-roads path, .ward-water path, .moat path { vector-effect: non-scaling-stroke; }
.boundary { fill: none; stroke: #c4c4c4; stroke-width: 2; stroke-dasharray: 10 2; }
.road { fill: none; stroke: #fff; stroke-width: 3; stroke-linejoin: round; }
.minor { fill: none; stroke: #fdfdfd; stroke-width: 2; }
.ward { stroke: #666; stroke-width: 2; stroke-linejoin: round; }
.ward-roads { fill: none; stroke: #fff; stroke-width: 2; opacity: .14; }
.ward-water { fill: none; stroke: #5b7e9c; stroke-width: 6; opacity: .22; }
.moat { fill: none; stroke: #e4e8ea; stroke-width: 3; }
.plane { fill: #777; }
.plane.in-ward { fill: #46648a; }

.place {
  font-family: Roboto, "Liberation Sans", sans-serif;
  font-size: 22px;
  font-weight: 500;
  fill: #999;
}
.place.city { font-size: 25px; fill: #707070; }
.place.capital { font-size: 28px; fill: #8b9ba8; }
.place.small { font-size: 17px; font-weight: 400; }
.place.line { font-size: 14px; font-weight: 400; }
.place.in-ward { fill: #55708f; }
.place.sea { fill: #90999d; font-style: italic; }

.zoom {
  position: absolute;
  top: 20px;
  left: 20px;
  width: 68px;
  border: 4px solid rgba(0, 0, 0, .2);
  border-radius: 8px;
}
.zoom button {
  display: block;
  width: 100%;
  height: 60px;
  padding-top: 14px;
  border: 0;
  background: #fff;
  color: #000;
  font: bold 44px/46px "Liberation Mono", monospace;
}
.zoom button:first-child { border-bottom: 2px solid #ccc; border-radius: 4px 4px 0 0; }
.zoom button:last-child { border-radius: 0 0 4px 4px; }

.credits {
  position: absolute;
  right: 0;
  bottom: 0;
  padding: 0 10px;
  background: rgba(255, 255, 255, .7);
  font-size: 22px;
  line-height: 33px;
}
.credits a { color: #2f7aa8; }
```
